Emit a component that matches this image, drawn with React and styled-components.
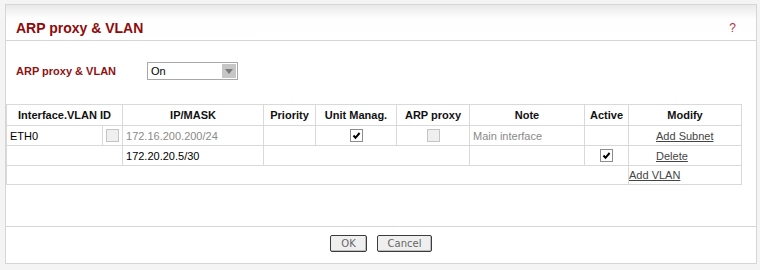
import React from "react"
import styled, { createGlobalStyle } from "styled-components"

const GlobalStyle = createGlobalStyle`
  html, body {
    margin: 0;
    padding: 0;
    background: #f4f4f4;
    font-family: "Liberation Sans", Arial, sans-serif;
  }
`

const Page = styled.div`
  width: 760px;
  height: 270px;
  padding: 4px 0 0 5px;
  box-sizing: border-box;
`

const Panel = styled.div`
  width: 752px;
  height: 260px;
  box-sizing: border-box;
  border: 1px solid #d6d6d6;
  background: #fff;
  display: flex;
  flex-direction: column;
`

const Header = styled.div`
  flex: none;
  border-bottom: 1px solid #d6d6d6;
  background: linear-gradient(to bottom, #e9e9e9 0px, #fdfdfd 13px, #fff 100%);
  display: flex;
  align-items: center;
  justify-content: space-between;
  padding: 10px 20px 0 10px;
  box-sizing: content-box;
  height: 25px;
`

const Title = styled.h1`
  margin: 0;
  font-size: 14px;
  font-weight: bold;
  color: #8e0b0b;
`

const Help = styled.span`
  font-size: 12px;
  color: #b3303e;
  cursor: pointer;
`

const Body = styled.div`
  height: 185px;
  flex: none;
  padding-top: 21px;
  box-sizing: border-box;
`

const FormRow = styled.div`
  display: flex;
  align-items: center;
  padding-left: 10px;
  height: 18px;
`

const Label = styled.label`
  width: 131px;
  font-size: 11px;
  font-weight: bold;
  color: #8e1212;
`

const Select = styled.div`
  width: 91px;
  height: 18px;
  box-sizing: border-box;
  border: 1px solid #a8a8a8;
  display: flex;
  align-items: center;
  justify-content: space-between;
  font-size: 11px;
  color: #000;
  padding-left: 3px;
  background: #fff;
`

const Arrow = styled.span`
  width: 14px;
  height: 14px;
  margin-right: 1px;
  background: #c6c6c6;
  display: flex;
  align-items: center;
  justify-content: center;

  &::after {
    content: "";
    border-left: 4px solid transparent;
    border-right: 4px solid transparent;
    border-top: 5px solid #7a7a7a;
  }
`

const Table = styled.table`
  margin-top: 24px;
  width: 735px;
  table-layout: fixed;
  border-collapse: collapse;
  font-size: 11px;
  color: #000;
`

const Th = styled.th`
  height: 20px;
  padding: 0;
  border: 1px solid #d9d9d9;
  font-weight: bold;
  text-align: center;
  color: #111;
`

const Td = styled.td`
  height: ${p => p.$h || 19}px;
  padding: 0 ${p => (p.$pad === undefined ? 3 : p.$pad)}px;
  border: 1px solid #d9d9d9;
  text-align: ${p => p.$align || "left"};
  color: ${p => (p.$muted ? "#8a8a8a" : "#000")};
  white-space: nowrap;
`

const Link = styled.a`
  color: #444;
  text-decoration: underline;
  cursor: pointer;
  padding-left: ${p => p.$indent || 0}px;
`

const Box = styled.span`
  display: inline-block;
  vertical-align: middle;
  width: 11px;
  height: 11px;
  border: 1px solid ${p => (p.$disabled ? "#c4c4c4" : "#8c8c8c")};
  background: ${p => (p.$disabled ? "#efefef" : "#fff")};
  position: relative;

  svg {
    position: absolute;
    left: 0;
    top: 0;
  }
`

const Footer = styled.div`
  flex: 1;
  border-top: 1px solid #d6d6d6;
  display: flex;
  justify-content: center;
  align-items: flex-start;
  gap: 10px;
  padding-top: 8px;
`

const Button = styled.button`
  height: 17px;
  min-width: ${p => p.$w}px;
  padding: 0 6px;
  border: 1px solid #3c3c3c;
  border-radius: 2px;
  background: #efefef;
  font-family: "DejaVu Sans", Verdana, sans-serif;
  font-size: 10px;
  color: #666;
  line-height: 15px;
  box-shadow: inset -1px -1px 0 #bdbdbd;
`

const Check = ({ checked, disabled }) => (
  <Box $disabled={disabled}>
    {checked && (
      <svg width="11" height="11" viewBox="0 0 11 11">
        <path d="M2.5 5.5 L4.5 7.8 L8.6 3" fill="none" stroke="#000" strokeWidth="2" />
      </svg>
    )}
  </Box>
)

const columns = [96, 20, 141, 52, 81, 73, 115, 44, 113]

export default function App() {
  return (
    <Page>
      <GlobalStyle />
      <Panel>
        <Header>
          <Title>ARP proxy &amp; VLAN</Title>
          <Help>?</Help>
        </Header>

        <Body>
          <FormRow>
            <Label>ARP proxy &amp; VLAN</Label>
            <Select>
              On
              <Arrow />
            </Select>
          </FormRow>

          <Table>
            <colgroup>
              {columns.map((w, i) => <col key={i} style={{ width: w }} />)}
            </colgroup>
            <thead>
              <tr>
                <Th colSpan={2}>Interface.VLAN ID</Th>
                <Th>IP/MASK</Th>
                <Th>Priority</Th>
                <Th>Unit Manag.</Th>
                <Th>ARP proxy</Th>
                <Th>Note</Th>
                <Th>Active</Th>
                <Th>Modify</Th>
              </tr>
            </thead>
            <tbody>
              <tr>
                <Td>ETH0</Td>
                <Td $align="center" $pad={0}><Check disabled /></Td>
                <Td $muted>172.16.200.200/24</Td>
                <Td />
                <Td $align="center"><Check checked /></Td>
                <Td $align="center"><Check disabled /></Td>
                <Td $muted>Main interface</Td>
                <Td />
                <Td><Link $indent={24}>Add Subnet</Link></Td>
              </tr>
              <tr>
                <Td colSpan={2} />
                <Td>172.20.20.5/30</Td>
                <Td colSpan={3} />
                <Td />
                <Td $align="center"><Check checked /></Td>
                <Td><Link $indent={24}>Delete</Link></Td>
              </tr>
              <tr>
                <Td colSpan={8} $h={18} />
                <Td $h={18} $pad={0}><Link>Add VLAN</Link></Td>
              </tr>
            </tbody>
          </Table>
        </Body>

        <Footer>
          <Button $w={37}>OK</Button>
          <Button $w={55}>Cancel</Button>
        </Footer>
      </Panel>
    </Page>
  )
}
